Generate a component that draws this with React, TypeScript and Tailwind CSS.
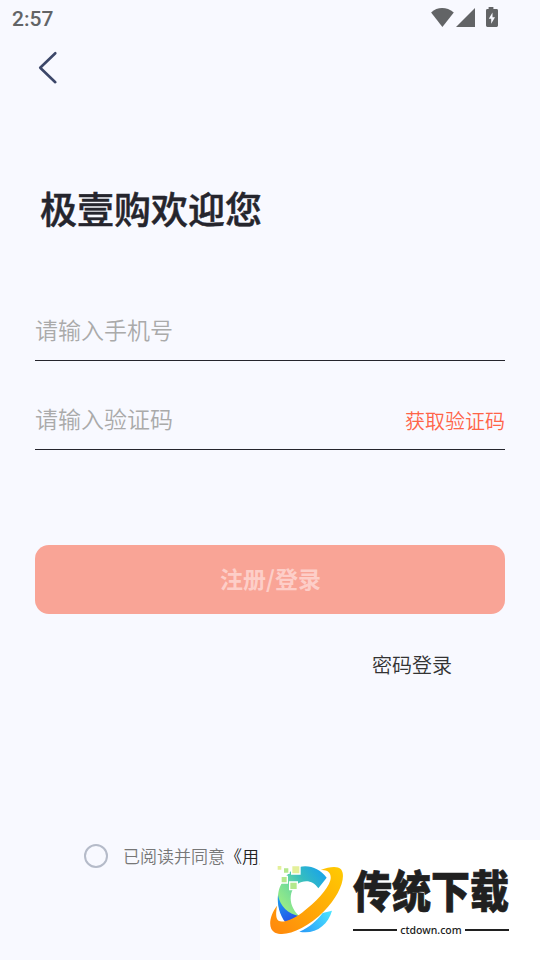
import { useState } from "react";

function StatusBar() {
  return (
    <div className="flex h-9 items-center justify-between pl-3 pr-[40px]">
      <span className="pt-[2px] font-['Roboto',sans-serif] text-[21px] font-medium leading-9 text-[#626466]">
        2:57
      </span>
      <svg width="70" height="36" viewBox="0 0 70 36" fill="#626466">
        <path d="M1.1 12.4C7.5 6.6 16.5 6.6 23.8 12.4L12.4 27z" />
        <path d="M45 8v19H26z" />
        <path
          fillRule="evenodd"
          d="M58.6 7h4.8v2h3.2q1.4 0 1.4 1.4v15.2q0 1.4-1.4 1.4H57.400q-1.4 0-1.4-1.4V10.400q0-1.400 1.400-1.400h1.200zM62.500 12.500L58.800 18.700h2.400v5l3.800-6.500h-2.500z"
        />
      </svg>
    </div>
  );
}

function LogoIcon() {
  return (
    <svg className="shrink-0" width="76" height="75" viewBox="42 75 228 225">
      <defs>
        <linearGradient id="arc" x1="80" y1="210" x2="210" y2="110" gradientUnits="userSpaceOnUse">
          <stop offset="0" stopColor="#98ec86" />
          <stop offset="0.3" stopColor="#74dc98" />
          <stop offset="0.6" stopColor="#35bdc0" />
          <stop offset="1" stopColor="#18a2ec" />
        </linearGradient>
        <linearGradient id="ring" x1="60" y1="290" x2="250" y2="100" gradientUnits="userSpaceOnUse">
          <stop offset="0" stopColor="#ff8a0c" />
          <stop offset="1" stopColor="#ffc802" />
        </linearGradient>
        <linearGradient id="leaf" x1="70" y1="190" x2="110" y2="260" gradientUnits="userSpaceOnUse">
          <stop offset="0" stopColor="#1d9bf0" />
          <stop offset="1" stopColor="#2450e8" />
        </linearGradient>
        <linearGradient id="base" x1="140" y1="290" x2="230" y2="230" gradientUnits="userSpaceOnUse">
          <stop offset="0" stopColor="#2a9cf8" />
          <stop offset="1" stopColor="#4be4ff" />
        </linearGradient>
      </defs>
      <path
        fill="url(#arc)"
        d="M133 96C165 89 194 101 215 128L190 160C178 142 160 135 140 141C104 152 92 206 133 243L95 261C66 230 60 175 82 142C94 118 112 101 133 96z"
      />
      <path fill="url(#leaf)" d="M69 180C75 214 99 236 133 244L91 262C74 240 66 210 69 180z" />
      <path fill="url(#base)" d="M133 290C164 277 184 258 203 234L231 227C219 271 179 300 133 290z" />
      <path
        fill="url(#ring)"
        d="M66 212C42 244 38 281 60 293C92 307 153 283 207 229C251 185 276 126 258 103C246 91 222 96 197 105C219 103 231 115 226 136C218 164 183 202 141 233C105 259 70 269 65 249C62 239 64 227 66 212z"
      />
      <g stroke="#fff" strokeWidth="8" className="[paint-order:stroke]">
        <path fill="#e4f09a" d="M68 93h11v11H68zM112 94h21v21h-21z" />
        <path fill="#b4e88c" d="M87 100h13v13H87zM80 126h15v16H80zM106 143h19v19h-19z" />
      </g>
    </svg>
  );
}

function SiteBadge() {
  return (
    <div className="absolute bottom-0 right-0 flex h-[120px] w-[280px] bg-white pl-[9px] pt-5">
      <LogoIcon />
      <div className="ml-2 w-[158px] pt-2">
        <div className="flex h-[42px] origin-center scale-y-[1.14] items-center whitespace-nowrap font-['Noto_Sans_CJK_SC',sans-serif] text-[39px] font-black leading-[36px] text-[#202020] [-webkit-text-stroke:0.6px_#202020]">
          传统下载
        </div>
        <div className="mt-2.5 flex h-5 w-[156px] items-center gap-[3px]">
          <span className="h-0.5 flex-1 bg-[#202020]" />
          <span className="font-['Noto_Sans',sans-serif] text-[10.500px] font-medium leading-4 text-[#202020]">
            ctdown.com
          </span>
          <span className="h-0.5 flex-1 bg-[#202020]" />
        </div>
      </div>
    </div>
  );
}

export default function App() {
  const [phone, setPhone] = useState("");
  const [code, setCode] = useState("");
  const [agreed, setAgreed] = useState(false);

  return (
    <div className="relative h-[960px] w-[540px] overflow-hidden bg-[#f8f9ff] font-['Noto_Sans_CJK_SC',sans-serif] font-[350]">
      <StatusBar />

      <button className="ml-[35px] mt-3 block cursor-pointer">
        <svg width="26" height="40" viewBox="0 0 26 40" fill="none" stroke="#3c4769" strokeWidth="2.6" strokeLinecap="round" strokeLinejoin="round">
          <path d="M20.300 5.200L5.200 19.700L20.300 34.200" />
        </svg>
      </button>

      <main className="px-[35px]">
        <h1 className="ml-[5px] mt-[92px] text-[37px] font-medium leading-[56px] text-[#25252d] [-webkit-text-stroke:0.5px_#25252d]">
          极壹购欢迎您
        </h1>

        {/* Login form */}
        <div className="mt-[65px] flex h-[60px] items-center border-b border-[#25252d] pb-[3px]">
          <input
            type="tel"
            value={phone}
            placeholder="请输入手机号"
            className="h-10 w-full text-[23px] outline-none placeholder:text-[#aaaaaa]"
            onChange={(e) => setPhone(e.target.value)}
          />
        </div>
        <div className="mt-[29px] flex h-[60px] items-center justify-between border-b border-[#25252d] pb-[3px]">
          <input
            type="text"
            value={code}
            placeholder="请输入验证码"
            className="h-10 w-[240px] text-[23px] outline-none placeholder:text-[#aaaaaa]"
            onChange={(e) => setCode(e.target.value)}
          />
          <button className="mt-[5px] cursor-pointer text-[20px] leading-8 text-[#ff6448]">获取验证码</button>
        </div>

        <button className="mt-[95px] h-[69px] w-full rounded-[14px] bg-[#f9a496] pb-0.5 pl-px text-[23px] font-bold text-[#fdcec8]">
          注册/登录
        </button>

        <div className="mr-[53px] mt-9 flex justify-end">
          <button className="cursor-pointer text-[20px] leading-[30px] text-[#333333]">密码登录</button>
        </div>
      </main>

      {/* Agreement */}
      <label className="ml-[84px] mt-[164px] flex h-6 cursor-pointer items-center whitespace-nowrap text-[17px] text-[#777777]">
        <input
          type="checkbox"
          checked={agreed}
          className="mr-[15px] size-6 appearance-none rounded-full border-2 border-[#b5bbc9] checked:bg-[#ff6448]"
          onChange={(e) => setAgreed(e.target.checked)}
        />
        已阅读并同意<span className="text-[#222222]">《用户</span>
      </label>

      <SiteBadge />
    </div>
  );
}
